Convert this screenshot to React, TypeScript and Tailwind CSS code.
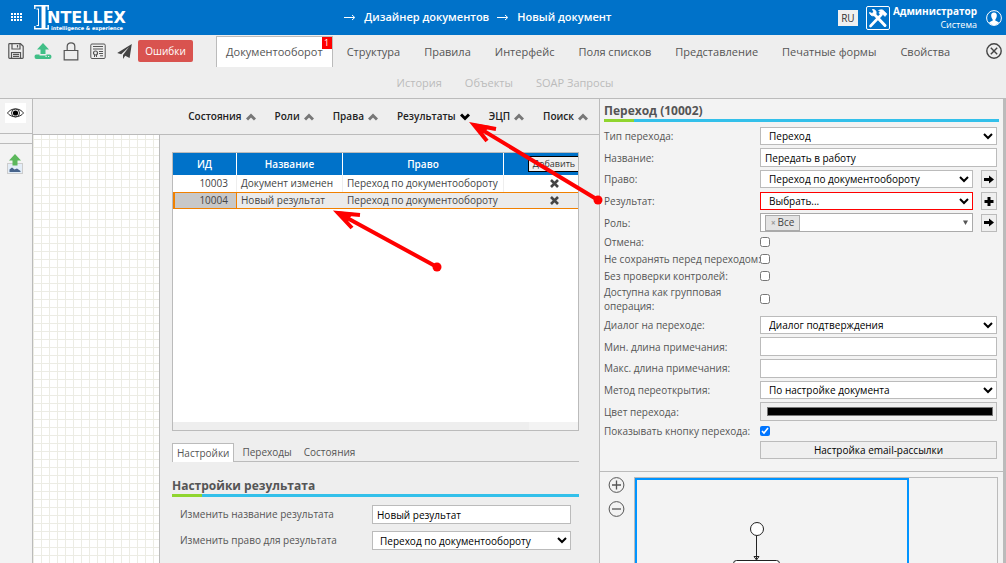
import React from "react";
import clsx from "clsx";

const TABS = [
  "Документооборот",
  "Структура",
  "Правила",
  "Интерфейс",
  "Поля списков",
  "Представление",
  "Печатные формы",
  "Свойства",
];
const SUB_TABS = ["История", "Объекты", "SOAP Запросы"];

const MENUS = ["Состояния", "Роли", "Права", "Результаты", "ЭЦП", "Поиск"];

const RESULTS = [
  { id: 10003, name: "Документ изменен", right: "Переход по документообороту" },
  { id: 10004, name: "Новый результат", right: "Переход по документообороту" },
];

const SELECTED_ID = 10004;

function Logo() {
  return (
    <a href="#" className="flex items-start text-white" aria-label="Intellex">
      <svg width="15" height="25" viewBox="0 0 15 25" fill="none" stroke="#fff">
        <path d="M0 .8H15M0 23.8H15" strokeWidth="1.6" />
        <path d="M.8 0V4M.8 21V24M14.2 0V5M14.2 20V24" strokeWidth="1.4" />
        <path d="M4.5 4V20M2.5 4H5M2.5 20.5H5" strokeWidth="1" />
        <path d="M9.5 1V24" strokeWidth="4" />
      </svg>
      <span className="-ml-[2px] flex flex-col pt-1 font-['DejaVu_Sans',sans-serif]">
        <span className="text-[16px] leading-[17px] font-bold">NTELLEX</span>
        <span className="pl-1 text-[5px] leading-[5px] font-bold">intelligence &amp; experience</span>
      </span>
    </a>
  );
}

function Header() {
  return (
    <header className="flex h-[35px] shrink-0 items-center bg-[#0072c9] text-white">
      <button className="ml-[11px] mr-3" aria-label="Меню">
        <svg width="11" height="9" viewBox="0 0 11 9" fill="#fff">
          {[0, 3, 6].map((y) =>
            [0, 3, 6, 9].map((x) => <rect key={`${x}-${y}`} x={x} y={y} width="2" height="2" />)
          )}
        </svg>
      </button>
      <Logo />
      <nav className="flex flex-1 items-center justify-center gap-2 pr-2 text-[11px] font-semibold">
        <BreadcrumbArrow />
        <a href="#">Дизайнер документов</a>
        <BreadcrumbArrow />
        <a href="#">Новый документ</a>
      </nav>
      <div className="flex items-center pr-1">
        <button className="h-4 w-5 bg-[#f0f0f0] text-[10px] leading-4 text-[#333]">RU</button>
        <button className="mr-[3px] ml-2" aria-label="Инструменты">
          <svg width="24" height="24" viewBox="0 0 24 24" fill="none" stroke="#fff">
            <rect x=".5" y=".5" width="23" height="23" rx="1.5" />
            <path d="M9 9L19 19.5" strokeWidth="3" strokeLinecap="round" />
            <path d="M3.5 6.5C4 9 6 10.5 8.5 9.5L10 7.5C10.5 5 9 3.5 6.5 3.5L8 6L6 7.5Z" fill="#fff" />
            <path d="M15.5 8.5L4.5 20" strokeWidth="2.6" strokeLinecap="round" />
            <path d="M12.5 4.5C15 3 17 3.5 18.5 5.5L21 8L19 10.5L16.5 8L15 9L12.8 6.8L14.5 5.5Z" fill="#fff" strokeWidth=".6" />
          </svg>
        </button>
        <div className="flex flex-col text-right text-[10px] leading-[13px]">
          <strong>Администратор</strong>
          <span className="text-[9px]">Система</span>
        </div>
        <button className="ml-[9px]" aria-label="Профиль">
          <svg width="16" height="16" viewBox="0 0 16 16">
            <circle cx="8" cy="8" r="7.4" fill="none" stroke="#fff" />
            <path
              d="M8 2.5C5.9 2.5 5 4 5.2 6C5.4 7.6 6 8.8 6.6 9.3V10.8C5.5 11.3 4 11.6 3 12.6C4.2 14.2 6 15.2 8 15.2S11.8 14.2 13 12.6C12 11.6 10.5 11.3 9.4 10.8V9.3C10 8.8 10.6 7.6 10.8 6C11 4 10.1 2.5 8 2.5Z"
              fill="#fff"
            />
          </svg>
        </button>
      </div>
    </header>
  );
}

function BreadcrumbArrow() {
  return (
    <svg width="12" height="7" viewBox="0 0 12 7" fill="none" stroke="#fff">
      <path d="M0 3.5H10M8 1L10.8 3.5L8 6" />
    </svg>
  );
}

function Toolbar() {
  return (
    <div className="shrink-0 border-b border-[#bbb] text-[11px] text-[#555]">
      <div className="flex h-8 items-start">
        <div className="flex items-start gap-[11px] pl-2 pt-[6px]">
          <button aria-label="Сохранить">
            <svg width="16" height="20" viewBox="0 0 16 20" fill="none" stroke="#555" strokeWidth="1.2">
              <path d="M.8 3.5Q.8 2.7 1.6 2.7H12.5L15.2 5.2V16.5Q15.2 17.3 14.4 17.3H1.6Q.8 17.3.8 16.5Z" />
              <path d="M4 2.7V8H12V2.7M9.5 4V6.5M3.5 17V11.5H12.5V17M5 13.4H11M5 15.4H11" />
            </svg>
          </button>
          <button className="-ml-px" aria-label="Загрузить">
            <svg width="18" height="20" viewBox="0 0 18 20" fill="#41bf87">
              <path d="M9 2L15 8.5H11.5V13H6.5V8.5H3Z" />
              <path d="M2.5 13.5H5.5V14.5H12.5V13.5H15.5Q17.5 13.5 17.5 15.7T15.5 18H2.5Q.5 18 .5 15.7T2.5 13.5Z" />
              <path d="M11.5 15.5H12.7M14 15.5H15.2" stroke="#eee" />
            </svg>
          </button>
          <button aria-label="Заблокировать">
            <svg width="16" height="20" viewBox="0 0 16 20" fill="none" stroke="#555" strokeWidth="1.2">
              <path d="M1.2 9.5H14.8V18.8H1.2Z" />
              <path d="M4.2 9.5V5.3C4.2 3 5.8 1.8 8 1.8S11.8 3 11.8 5.3V9.5" />
            </svg>
          </button>
          <button aria-label="Протокол">
            <svg width="16" height="20" viewBox="0 0 16 20" fill="none" stroke="#555">
              <rect x=".8" y="3" width="14.4" height="14.5" rx="1.2" />
              <path d="M3 5.5H13M3 8H13M9 10.5H13M9 12.5H13M10 14.8H13" />
              <circle cx="5.5" cy="12" r="2" strokeWidth="1.2" />
              <path d="M4.5 14V16M6.5 14V16" />
            </svg>
          </button>
          <button aria-label="Отправить">
            <svg width="15" height="20" viewBox="0 0 15 20" fill="#444">
              <path d="M14.8 3L.2 12L4.2 13.2L12 6L6 14V18L8.2 14.8L12.6 17Z" />
            </svg>
          </button>
        </div>
        <button className="ml-[6px] mt-[5px] h-[22px] w-[55px] rounded-xs bg-[#d9534f] text-[10px] text-white">
          Ошибки
        </button>
        <ul className="ml-[23px] flex flex-1 gap-1 pt-px">
          {TABS.map((tab, i) => (
            <li
              key={tab}
              className={clsx(
                "relative h-[31px] border px-[9px] leading-[29px] whitespace-nowrap",
                i === 0 ? "border-b-0 border-[#bbb] bg-white" : "border-transparent"
              )}
            >
              <a href="#">{tab}</a>
              {i === 0 && (
                <span className="absolute top-0 right-0 h-3 w-[10px] bg-[#f00] text-center text-[9px] leading-3 text-white">
                  1
                </span>
              )}
            </li>
          ))}
        </ul>
        <button className="mr-1 mt-2 w-4" aria-label="Закрыть">
          <svg width="16" height="16" viewBox="0 0 16 16" fill="none" stroke="#444" strokeWidth="1.4">
            <circle cx="8" cy="8" r="7.2" />
            <path d="M4.8 4.8L11.2 11.2M11.2 4.8L4.8 11.2" />
          </svg>
        </button>
      </div>
      <ul className="flex h-[31px] justify-center gap-[23px] pl-1 leading-[32px] text-[#bbb]">
        {SUB_TABS.map((tab) => (
          <li key={tab}>
            <a href="#">{tab}</a>
          </li>
        ))}
      </ul>
    </div>
  );
}

function SideBar() {
  return (
    <aside className="flex w-[33px] shrink-0 flex-col border-r border-[#bbb] bg-[#f3f3f3]">
      <div className="flex h-[35px] items-start border-b border-[#bbb] pt-1 pl-[5px]">
        <button className="bg-white" aria-label="Просмотр">
          <svg width="21" height="20" viewBox="0 0 21 20" fill="none" stroke="#333">
            <path d="M2.5 10C6 4.5 15 4.5 18.5 10C15 15 6 15 2.5 10Z" />
            <circle cx="10.5" cy="10" r="4" />
            <circle cx="10.5" cy="10" r="2.6" fill="#000" stroke="none" />
          </svg>
        </button>
      </div>
      <div className="h-[10px] border-b border-[#bbb]" />
      <button className="mt-[10px] ml-[7px] w-4" aria-label="Экспорт изображения">
        <svg width="16" height="20" viewBox="0 0 16 20">
          <rect x=".5" y="9.5" width="15" height="10" fill="#e3edf7" stroke="#ccc" />
          <path d="M2.5 18V15.5L5 13.5L7.5 15.5L10 14.5L13.5 17V18Z" fill="#48648c" />
          <path d="M8 0L14 6.5H10.5V11.5H5.5V6.5H2Z" fill="#5cb85c" />
        </svg>
      </button>
    </aside>
  );
}

function MenuChevron({ open }: { open: boolean }) {
  return (
    <svg width="10" height="8" viewBox="0 0 10 8" fill="none" strokeWidth="3" stroke={open ? "#000" : "#777"}>
      <path d={open ? "M1 1.5L5 5.5L9 1.5" : "M1 6.5L5 2.5L9 6.5"} />
    </svg>
  );
}

function CrossIcon() {
  return (
    <svg className="mx-auto" width="9" height="9" viewBox="0 0 9 9" stroke="#444" strokeWidth="2.6">
      <path d="M1 1L8 8M8 1L1 8" />
    </svg>
  );
}

function ResultsTable() {
  return (
    <div className="flex h-[279px] flex-col overflow-hidden border border-[#bbb] bg-white">
      <div className="flex-1 overflow-hidden">
        <table className="w-[432px] table-fixed border-separate border-spacing-0 text-[10px] text-[#444]">
          <colgroup>
            <col className="w-[64px]" />
            <col className="w-[106px]" />
            <col className="w-[161px]" />
            <col className="w-[101px]" />
          </colgroup>
          <thead>
            <tr className="h-[22px] bg-[#0072c9] text-white">
              <th className="border-r border-white p-0 font-semibold">ИД</th>
              <th className="border-r border-white p-0 font-semibold">Название</th>
              <th className="border-r border-white p-0 font-semibold">Право</th>
              <th className="p-0">
                <button className="ml-6 block h-4 w-[52px] border border-black bg-[#efefef] text-[9px] leading-[14px] font-normal text-[#333]">
                  Добавить
                </button>
              </th>
            </tr>
          </thead>
          <tbody>
            {RESULTS.map((row) => {
              const selected = row.id === SELECTED_ID;
              const cell = selected ? "border-y border-[#f08000]" : "border-r border-[#eee]";
              return (
                <tr key={row.id} className={clsx("h-[17px] leading-[15px]", selected && "bg-[#ebebeb]")}>
                  <td className={clsx("p-0 pr-2 text-right", cell, selected && "border-r border-l-2 bg-[#c8c8c8]")}>
                    {row.id}
                  </td>
                  <td className={clsx("p-0 pl-1 whitespace-nowrap", cell)}>{row.name}</td>
                  <td className={clsx("p-0 pl-1 whitespace-nowrap", cell)}>{row.right}</td>
                  <td className={clsx("p-0", cell)}>
                    <button className="block w-full" aria-label="Удалить">
                      <CrossIcon />
                    </button>
                  </td>
                </tr>
              );
            })}
          </tbody>
        </table>
      </div>
      <div className="flex h-2 justify-end bg-[#eee]">
        <div className="w-[49px] bg-[#f3f3f3]" />
      </div>
    </div>
  );
}

function SectionTitle({ children }: { children: React.ReactNode }) {
  return (
    <>
      <h2 className="text-[12px] leading-4 font-bold text-[#555]">{children}</h2>
      <div className="h-[3px] bg-[#33c0ea]">
        <div className="h-full w-[30px] bg-[#90d52f]" />
      </div>
    </>
  );
}

const control = "h-[19px] w-full min-w-0 border border-[#bbb] bg-white text-[10px] text-black";

function Workspace() {
  return (
    <main className="flex min-w-0 flex-1 flex-col">
      <nav className="flex h-9 shrink-0 items-center justify-end gap-[19px] border-b border-[#bbb] pr-[11px] text-[10px] font-semibold text-[#222]">
        {MENUS.map((menu) => (
          <button key={menu} className="flex items-center gap-1">
            {menu}
            <MenuChevron open={menu === "Результаты"} />
          </button>
        ))}
      </nav>
      <div className="flex min-h-0 flex-1">
        <div className="w-[127px] shrink-0 border-r border-[#bbb] bg-white bg-[linear-gradient(to_right,#ecece4_1px,transparent_1px),linear-gradient(to_bottom,#ecece4_1px,transparent_1px)] bg-[size:8px_8px] bg-[position:0px_4px]" />
        <div className="min-w-0 flex-1 pt-[17px] pr-5 pl-3">
          <ResultsTable />
          <ul className="mt-3 flex h-[19px] border-b border-[#bbb] text-[10px] leading-[18px] text-[#555]">
            <li className="h-[19px] border border-b-0 border-[#bbb] bg-white px-1">
              <a href="#">Настройки</a>
            </li>
            <li className="px-2">
              <a href="#">Переходы</a>
            </li>
            <li className="px-1">
              <a href="#">Состояния</a>
            </li>
          </ul>
          <div className="mt-4">
            <SectionTitle>Настройки результата</SectionTitle>
          </div>
          <div className="flex flex-col gap-[7px] pt-2 pr-2 pl-2 text-[10px] text-[#555]">
            <div className="flex items-center">
              <label htmlFor="res-name" className="w-48 shrink-0">
                Изменить название результата
              </label>
              <input id="res-name" className={clsx(control, "px-1")} defaultValue="Новый результат" />
            </div>
            <div className="flex items-center">
              <label htmlFor="res-right" className="w-48 shrink-0">
                Изменить право для результата
              </label>
              <select id="res-right" className={clsx(control, "px-[3px]")}>
                <option>Переход по документообороту</option>
              </select>
            </div>
          </div>
        </div>
      </div>
    </main>
  );
}

type RowProps = { id: string; label: string; className?: string; children: React.ReactNode };

function Row({ id, label, className = "h-[22px]", children }: RowProps) {
  return (
    <div className={clsx("flex items-center", className)}>
      <label htmlFor={id} className="w-[156px] shrink-0 leading-[14px]">
        {label}
      </label>
      <div className="flex min-w-0 flex-1 items-center gap-2">{children}</div>
    </div>
  );
}

function Select({ id, value, invalid }: { id: string; value: string; invalid?: boolean }) {
  return (
    <select
      id={id}
      className={clsx(
        "h-[18px] w-full min-w-0 border bg-white px-1 text-[10px] text-black",
        invalid ? "border-[#f00]" : "border-[#bbb]"
      )}
    >
      <option>{value}</option>
    </select>
  );
}

function SideButton({ plus }: { plus?: boolean }) {
  return (
    <button
      type="button"
      className="flex h-[18px] w-4 shrink-0 items-center justify-center border border-[#bbb] bg-[#efefef]"
      aria-label={plus ? "Добавить" : "Перейти"}
    >
      <svg className="shrink-0" width="10" height="9" viewBox="0 0 10 9">
        <path d={plus ? "M3.5 0H6.5V3H9.5V6H6.5V9H3.5V6H.5V3H3.5Z" : "M0 3H5V.5L10 4.5L5 8.5V6H0Z"} />
      </svg>
    </button>
  );
}

function Checkbox({ id, checked }: { id: string; checked?: boolean }) {
  return <input id={id} type="checkbox" defaultChecked={checked} className="size-[10px]" />;
}

const textInput = "h-[19px] w-full min-w-0 border border-[#bbb] bg-white px-1 text-[10px] text-black";

function TransitionForm() {
  return (
    <form className="border-b border-[#bbb] pr-[6px] pb-[10px] pl-1 text-[10px] text-[#555]">
      <div className="-mr-[2px] pt-1">
        <SectionTitle>Переход (10002)</SectionTitle>
      </div>
      <div className="pt-[3px]">
        <Row id="type" label="Тип перехода:">
          <Select id="type" value="Переход" />
        </Row>
        <Row id="name" label="Название:" className="h-[21px]">
          <input id="name" className={textInput} defaultValue="Передать в работу" />
        </Row>
        <Row id="right" label="Право:">
          <Select id="right" value="Переход по документообороту" />
          <SideButton />
        </Row>
        <Row id="result" label="Результат:">
          <Select id="result" value="Выбрать..." invalid />
          <SideButton plus />
        </Row>
        <Row id="role" label="Роль:" className="h-[21px]">
          <button
            id="role"
            type="button"
            className="flex h-[19px] min-w-0 flex-1 items-center justify-between border border-[#aaa] bg-white px-1"
          >
            <span className="flex h-4 items-center gap-[2px] border border-[#aaa] bg-[#e4e4e4] px-[5px] text-[#444]">
              <span className="text-[8px] font-bold text-[#999]">×</span>Все
            </span>
            <svg width="5" height="5" viewBox="0 0 5 5" fill="#555">
              <path d="M0 .5H5L2.5 5Z" />
            </svg>
          </button>
          <SideButton />
        </Row>
        <Row id="cancel" label="Отмена:" className="h-[17px]">
          <Checkbox id="cancel" />
        </Row>
        <Row id="nosave" label="Не сохранять перед переходом:" className="h-[17px] whitespace-nowrap">
          <Checkbox id="nosave" />
        </Row>
        <Row id="nocheck" label="Без проверки контролей:" className="h-[17px]">
          <Checkbox id="nocheck" />
        </Row>
        <Row id="group" label="Доступна как групповая операция:" className="h-[30px]">
          <Checkbox id="group" />
        </Row>
        <Row id="dialog" label="Диалог на переходе:">
          <Select id="dialog" value="Диалог подтверждения" />
        </Row>
        <Row id="min" label="Мин. длина примечания:" className="h-[21px]">
          <input id="min" className={textInput} />
        </Row>
        <Row id="max" label="Макс. длина примечания:">
          <input id="max" className={textInput} />
        </Row>
        <Row id="reopen" label="Метод переоткрытия:">
          <Select id="reopen" value="По настройке документа" />
        </Row>
        <Row id="color" label="Цвет перехода:" className="h-[21px]">
          <input
            id="color"
            type="color"
            defaultValue="#000000"
            className="h-[19px] w-full border border-[#bbb] bg-[#efefef] py-0 pr-px pl-1"
          />
        </Row>
        <Row id="show" label="Показывать кнопку перехода:" className="h-[17px]">
          <Checkbox id="show" checked />
        </Row>
        <div className="flex h-[22px] items-center pl-[156px]">
          <button type="button" className="h-[18px] w-full border border-[#bbb] bg-[#efefef] leading-4 text-black">
            Настройка email-рассылки
          </button>
        </div>
      </div>
    </form>
  );
}

function MiniMap() {
  return (
    <div className="flex min-h-0 flex-1 pt-[5px] pr-[5px] pl-2">
      <div className="flex w-[26px] shrink-0 flex-col gap-2">
        {["Увеличить", "Уменьшить"].map((label, i) => (
          <button key={label} aria-label={label} className="w-4">
            <svg width="17" height="16" viewBox="0 0 17 16" fill="none" stroke="#555">
              <circle cx="8.5" cy="8" r="7.4" />
              <path d={i === 0 ? "M4 8H13M8.5 3.5V12.5" : "M4 8H13"} strokeWidth="1.3" />
            </svg>
          </button>
        ))}
      </div>
      <div className="min-w-0 flex-1 overflow-hidden border border-b-0 border-[#bbb]">
        <div className="h-full w-[274px] border-2 border-b-0 border-[#0094ff]">
          <svg className="h-full w-full" fill="#fff" stroke="#222">
            <circle cx="120" cy="49" r="6.5" />
            <path d="M119.5 56V79M117 76.5H122L119.5 80Z" />
            <rect x="96.5" y="80.5" width="46" height="26" rx="3" />
          </svg>
        </div>
      </div>
    </div>
  );
}

// Red pointers drawn over the page
function Pointers() {
  return (
    <svg
      className="pointer-events-none absolute top-0 left-0"
      width="620"
      height="290"
      fill="none"
      stroke="#f00"
      strokeWidth="4"
    >
      <path d="M598 200L474 125M496 129L474 125L487 141" />
      <path d="M437 267L338 213M360 215L338 213L352 228" />
      <path d="M471 123L490 126L483 134ZM335 211L354 213L347 221Z" fill="#f00" stroke="none" />
      <circle cx="598" cy="200" r="4.5" fill="#f00" stroke="none" />
      <circle cx="437" cy="267" r="4.5" fill="#f00" stroke="none" />
    </svg>
  );
}

export default function App() {
  return (
    <div className="relative flex h-screen flex-col overflow-hidden bg-[#eee] font-['Open_Sans',sans-serif]">
      <Header />
      <Toolbar />
      <div className="flex min-h-0 flex-1">
        <SideBar />
        <Workspace />
        <section className="flex w-[407px] shrink-0 flex-col border-r-[3px] border-l border-[#bbb] bg-[#f3f3f3]">
          <TransitionForm />
          <MiniMap />
        </section>
      </div>
      <Pointers />
    </div>
  );
}
